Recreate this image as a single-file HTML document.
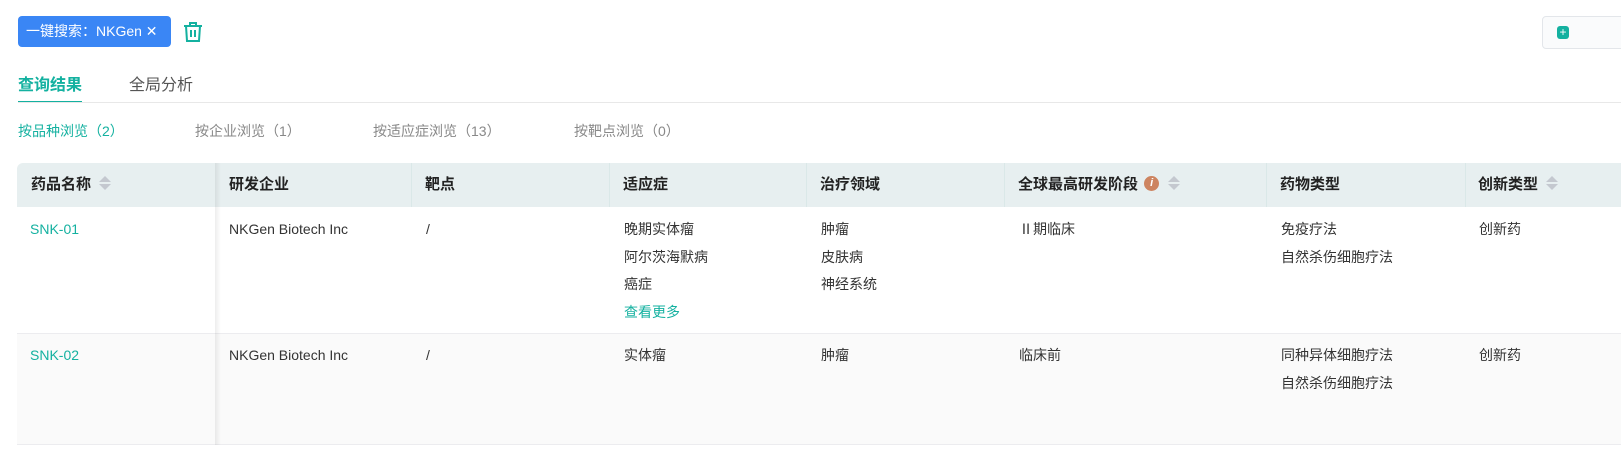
<!DOCTYPE html><html><head><meta charset="utf-8"><style>
body{margin:0;width:1621px;height:473px;background:#fff;font-family:"Liberation Sans","Noto Sans CJK SC",sans-serif;position:relative;overflow:hidden;color:#333}
.a{position:absolute;white-space:nowrap}
.tag{left:18px;top:16px;width:153px;height:31px;background:#3a86f5;border-radius:4px;color:#fff;font-size:14px;line-height:31px;text-indent:8px}
.th{top:163px;height:44px;line-height:44px;font-size:15px;font-weight:bold;color:#222}
.c{font-size:14px;color:#333;line-height:27.5px}
.g{color:#14b1a0}
.sort{display:inline-block;width:0;vertical-align:middle;margin-left:8px;position:relative;top:-2px}
.sort:before,.sort:after{content:"";position:absolute;left:0;border-left:6px solid transparent;border-right:6px solid transparent}
.sort:before{border-bottom:6px solid #c4c8cf;top:-7px}.sort:after{border-top:6px solid #c4c8cf;top:1px}
</style></head><body>
<div class="a tag">一键搜索：NKGen ✕</div>
<svg class="a" style="left:182px;top:21px" width="22" height="22" viewBox="0 0 22 22" fill="none" stroke="#14b1a0" stroke-width="2"><path d="M2 5h18M8 5V2h6v3M4 5l1 15h12l1-15M9 9v7M13 9v7"/></svg>
<div class="a" style="left:1542px;top:16px;width:90px;height:31px;border:1px solid #e3e6ea;border-radius:4px;background:#fafbfc"></div>
<div class="a" style="left:1557px;top:26px;width:12px;height:13px;background:#14b1a0;border-radius:3px;color:#fff;font-size:12px;line-height:13px;text-align:center">+</div>
<div class="a" style="left:18px;top:71px;font-size:16px;font-weight:bold;color:#14b1a0">查询结果</div>
<div class="a" style="left:129px;top:71px;font-size:16px;color:#555">全局分析</div>
<div class="a" style="left:18px;top:101px;width:64px;height:2px;background:#14b1a0"></div>
<div class="a" style="left:18px;top:102px;width:1603px;height:1px;background:#e8e8e8"></div>
<div class="a" style="left:18px;top:121px;font-size:14px;color:#14b1a0">按品种浏览（2）</div>
<div class="a" style="left:195px;top:121px;font-size:14px;color:#888">按企业浏览（1）</div>
<div class="a" style="left:373px;top:121px;font-size:14px;color:#888">按适应症浏览（13）</div>
<div class="a" style="left:574px;top:121px;font-size:14px;color:#888">按靶点浏览（0）</div>
<div class="a" style="left:17px;top:163px;width:1604px;height:44px;background:#e7eff0;border-radius:6px 0 0 0"></div>
<div class="a" style="left:17px;top:333px;width:1604px;height:112px;background:#fafafa"></div>
<div class="a" style="left:17px;top:333px;width:1604px;height:1px;background:#ececef"></div>
<div class="a" style="left:17px;top:444px;width:1604px;height:1px;background:#ececef"></div>
<div class="a" style="left:215px;top:163px;width:6px;height:282px;background:linear-gradient(90deg,rgba(0,0,0,.07),rgba(0,0,0,0))"></div>
<div class="a" style="left:411px;top:163px;width:1px;height:44px;background:#dae8e8"></div>
<div class="a" style="left:609px;top:163px;width:1px;height:44px;background:#dae8e8"></div>
<div class="a" style="left:806px;top:163px;width:1px;height:44px;background:#dae8e8"></div>
<div class="a" style="left:1004px;top:163px;width:1px;height:44px;background:#dae8e8"></div>
<div class="a" style="left:1266px;top:163px;width:1px;height:44px;background:#dae8e8"></div>
<div class="a" style="left:1465px;top:163px;width:1px;height:44px;background:#dae8e8"></div>
<div class="a th" style="left:31px">药品名称<span class="sort"></span></div>
<div class="a th" style="left:229px">研发企业</div>
<div class="a th" style="left:425px">靶点</div>
<div class="a th" style="left:623px">适应症</div>
<div class="a th" style="left:820px">治疗领域</div>
<div class="a th" style="left:1018px">全球最高研发阶段 <span style="display:inline-block;width:15px;height:15px;border-radius:50%;background:#cd8460;color:#fff;font-size:11px;line-height:15px;text-align:center;font-style:italic;vertical-align:middle;position:relative;top:-2px;margin-left:2px">i</span><span class="sort" style="margin-left:9px"></span></div>
<div class="a th" style="left:1280px">药物类型</div>
<div class="a th" style="left:1478px">创新类型<span class="sort"></span></div>
<div class="a c g" style="left:30px;top:216px">SNK-01</div>
<div class="a c" style="left:229px;top:216px">NKGen Biotech Inc</div>
<div class="a c" style="left:426px;top:216px">/</div>
<div class="a c" style="left:624px;top:216px">晚期实体瘤<br>阿尔茨海默病<br>癌症<br><span class="g">查看更多</span></div>
<div class="a c" style="left:821px;top:216px">肿瘤<br>皮肤病<br>神经系统</div>
<div class="a c" style="left:1019px;top:216px">Ⅱ期临床</div>
<div class="a c" style="left:1281px;top:216px">免疫疗法<br>自然杀伤细胞疗法</div>
<div class="a c" style="left:1479px;top:216px">创新药</div>
<div class="a c g" style="left:30px;top:342px">SNK-02</div>
<div class="a c" style="left:229px;top:342px">NKGen Biotech Inc</div>
<div class="a c" style="left:426px;top:342px">/</div>
<div class="a c" style="left:624px;top:342px">实体瘤</div>
<div class="a c" style="left:821px;top:342px">肿瘤</div>
<div class="a c" style="left:1019px;top:342px">临床前</div>
<div class="a c" style="left:1281px;top:342px">同种异体细胞疗法<br>自然杀伤细胞疗法</div>
<div class="a c" style="left:1479px;top:342px">创新药</div>
</body></html>
